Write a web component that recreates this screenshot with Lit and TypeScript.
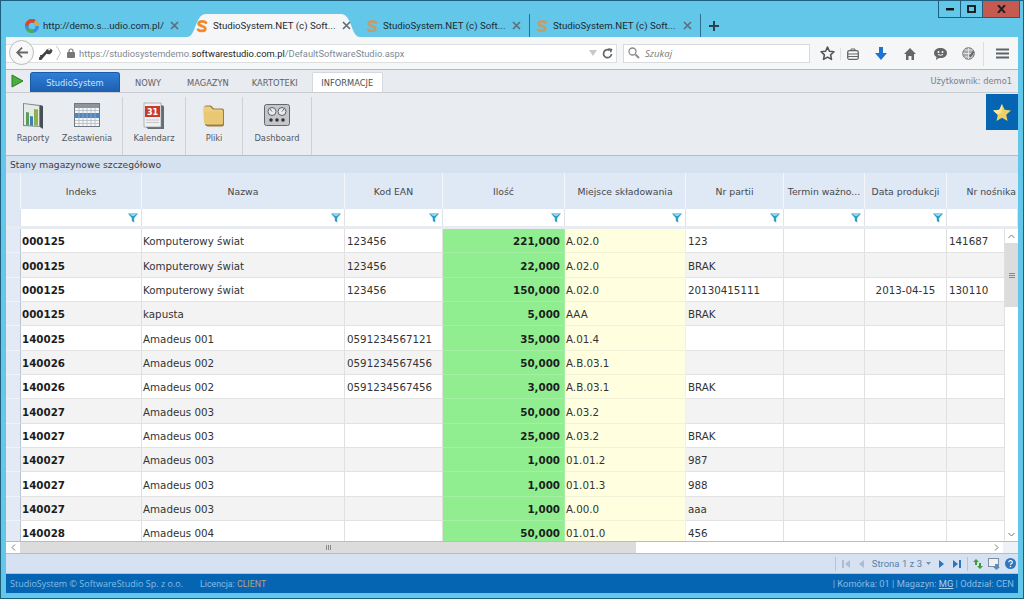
import { LitElement, html, css } from "lit";
import { customElement } from "lit/decorators.js";

const sLogo = (faded: boolean) => html`<svg class="fav ${faded ? "faded" : ""}" viewBox="0 0 16 16"><path d="M12.5 4.2C11 2.4 5 1.8 4.2 5c-.8 3.2 7.8 2.8 7.6 6.2-.2 3-6.4 2.8-8.2 1" fill="none" stroke="#f08a2c" stroke-width="3.2" stroke-linecap="round"/></svg>`;
const ringLogo = html`<svg class="fav" viewBox="0 0 16 16"><circle cx="8" cy="8" r="6" fill="none" stroke="#3c8fd8" stroke-width="4"/><path d="M2 8a6 6 0 0 1 9-5.2" fill="none" stroke="#d8472f" stroke-width="4"/><path d="M3 11.5a6 6 0 0 0 6 2.5" fill="none" stroke="#58a94a" stroke-width="4"/><path d="M11 3a6 6 0 0 1 3 5" fill="none" stroke="#e9a13b" stroke-width="4"/></svg>`;

const TABS = [
  { w: 167, t: "http://demo.s...udio.com.pl/", icon: ringLogo, active: false },
  { w: 173, t: "StudioSystem.NET (c) Soft...", icon: sLogo(false), active: true },
  { w: 170, t: "StudioSystem.NET (c) Soft...", icon: sLogo(true), active: false },
  { w: 171, t: "StudioSystem.NET (c) Soft...", icon: sLogo(true), active: false },
];

const HEAD = ["Indeks", "Nazwa", "Kod EAN", "Ilość", "Miejsce składowania", "Nr partii", "Termin ważno...", "Data produkcji", "Nr nośnika"];

const ROWS: string[][] = [
  ["000125", "Komputerowy świat", "123456", "221,000", "A.02.0", "123", "", "", "141687"],
  ["000125", "Komputerowy świat", "123456", "22,000", "A.02.0", "BRAK", "", "", ""],
  ["000125", "Komputerowy świat", "123456", "150,000", "A.02.0", "20130415111", "", "2013-04-15", "130110"],
  ["000125", "kapusta", "", "5,000", "AAA", "BRAK", "", "", ""],
  ["140025", "Amadeus 001", "0591234567121", "35,000", "A.01.4", "", "", "", ""],
  ["140026", "Amadeus 002", "0591234567456", "50,000", "A.B.03.1", "", "", "", ""],
  ["140026", "Amadeus 002", "0591234567456", "3,000", "A.B.03.1", "BRAK", "", "", ""],
  ["140027", "Amadeus 003", "", "50,000", "A.03.2", "", "", "", ""],
  ["140027", "Amadeus 003", "", "25,000", "A.03.2", "BRAK", "", "", ""],
  ["140027", "Amadeus 003", "", "1,000", "01.01.2", "987", "", "", ""],
  ["140027", "Amadeus 003", "", "1,000", "01.01.3", "988", "", "", ""],
  ["140027", "Amadeus 003", "", "1,000", "A.00.0", "aaa", "", "", ""],
  ["140028", "Amadeus 004", "", "50,000", "01.01.0", "456", "", "", ""],
];

const funnel = html`<svg class="funnel" viewBox="0 0 10 10"><path d="M0 .5h10L6.2 5v4.5L3.8 8V5z" fill="#2b9fc9"/><path d="M1 .5h8L6 3H4z" fill="#8fd6ee"/></svg>`;

const reportIcon = html`<svg class="ricon" viewBox="0 0 24 27"><path d="M2 1l17 2v22L2 24z" fill="#7f8a86"/><path d="M19 3l3 1v23l-3-2z" fill="#4a4f55"/><path d="M3 2l15 2v20L3 23z" fill="#e4ebe8"/><path d="M5 10l3 .4v13L5 23z" fill="#5d9c5a"/><path d="M9 14l3 .4v9.4L9 23.5z" fill="#3f7fb3"/><path d="M13 7l4 .4v16.3L13 23.5z" fill="#8cb24c"/></svg>`;
const tableIcon = html`<svg class="ricon wide" viewBox="0 0 26 24"><rect x=".5" y=".5" width="25" height="23" fill="#f4f6f8" stroke="#6f7780"/><rect x="1" y="1" width="24" height="4" fill="#8c949c"/><rect x="1" y="10" width="24" height="5" fill="#4d86c4"/><path d="M1 7.5h24M1 17.5h24M1 20.5h24M5 5v18M9 5v18M13 5v18M17 5v18M21 5v18" stroke="#a9b1ba" stroke-width=".7" fill="none"/></svg>`;
const calIcon = html`<svg class="ricon" viewBox="0 0 22 27"><path d="M18 3l3 1v23H5l-2-2h15z" fill="#666c73"/><rect x="1" y="1" width="17" height="24" fill="#eef0f2" stroke="#8a8f95" stroke-width=".6"/><rect x="2" y="4" width="15" height="11" fill="#c93a2c"/><text x="9.5" y="13" text-anchor="middle" class="cal31">31</text><path d="M3 18h13M3 20.5h13" stroke="#c4c8cc"/></svg>`;
const folderIcon = html`<svg class="ricon" viewBox="0 0 24 24"><path d="M2 4q0-2 2-2h5l3 3h8q2 0 2 2v14q0 2-2 2H6q-2 0-3-2z" fill="#9a7f3c"/><path d="M1 5q0-2 2-2h5l3 3h8q2 0 2 2v12q0 1-2 1H5q-2 0-3-2z" fill="#eccf84"/><path d="M2 8h19v12H5q-2 0-3-2z" fill="#e8c56d" opacity=".7"/></svg>`;
const dashIcon = html`<svg class="ricon wide" viewBox="0 0 26 22"><rect x=".5" y=".5" width="25" height="21" rx="2" fill="#c4c6c9" stroke="#63676c"/><circle cx="8" cy="7.5" r="4" fill="#e8eaec" stroke="#5e6267"/><circle cx="18" cy="7.5" r="4" fill="#e8eaec" stroke="#5e6267"/><path d="M8 7.5L6 5M18 7.5l2-2.6" stroke="#444" stroke-width=".8"/><circle cx="7" cy="16" r="1.8" fill="#33363a"/><circle cx="13" cy="16" r="1.8" fill="#33363a"/><circle cx="19" cy="16" r="1.8" fill="#33363a"/></svg>`;

@customElement("app-root")
export class AppRoot extends LitElement {
  static styles = css`
    :host { display: block; width: 1024px; height: 599px; overflow: hidden; font-family: "DejaVu Sans", sans-serif; }
    * { box-sizing: border-box; }
    svg { display: block; flex: none; }
    .win { position: relative; width: 1024px; height: 599px; background: #63c7ea; border: 1px solid #1f5f7e; padding: 0 5px 4px; display: flex; flex-direction: column; }
    .winbtns { position: absolute; top: 0; right: 3px; display: flex; height: 17px; border: 1px solid #1f5f7e; border-top: 0; }
    .wb { width: 22px; display: flex; align-items: center; justify-content: center; border-right: 1px solid #1f5f7e; }
    .wb.close { width: 36px; background: #c75a50; border-right: 0; }
    .strip { height: 36px; flex: none; display: flex; align-items: flex-end; padding-left: 14px; font-family: Roboto, sans-serif; font-size: 9.7px; color: #1c2a33; }
    .tab { position: relative; height: 23px; display: flex; align-items: center; gap: 4px; padding: 0 8px 0 5px; border-right: 1px solid #2a6f8e; flex: none; white-space: nowrap; }
    .tab.active { border-right: 0; padding-left: 8px; padding-right: 9px; }
    .tab.first { border-right: 0; }
    .tab .shape { position: absolute; inset: 0; width: 100%; height: 100%; }
    .tab > span, .tab > .fav, .tab > .x { position: relative; }
    .fav { width: 14px; height: 14px; }
    .fav.faded { opacity: .65; }
    .x { margin-left: auto; width: 9px; height: 9px; }
    .plus { width: 26px; height: 23px; display: flex; align-items: center; justify-content: center; }

    .nav { height: 33px; flex: none; background: #f5f6f7; border-bottom: 1px solid #b4b8bc; display: flex; align-items: center; gap: 6px; position: relative; padding-top: 1px; }
    .back { position: absolute; left: 3px; top: 3px; width: 25px; height: 25px; border-radius: 50%; border: 1px solid #b9bcbf; background: #f8f8f8; display: flex; align-items: center; justify-content: center; }
    .urlbar { width: 611px; height: 19px; margin-top: -1px; background: #fff; border: 1px solid #dcdee0; border-left: 0; display: flex; align-items: center; font-family: Roboto, sans-serif; font-size: 9.33px; color: #7e8a93; padding-left: 32px; padding-right: 3px; flex: none; }
    .urlbar b { color: #202428; font-weight: 400; }
    .key { margin-right: 3px; }
    .chev { margin-right: 6px; }
    .lock { margin-right: 4px; }
    .urlend { margin-left: auto; display: flex; align-items: center; gap: 5px; }
    .search { width: 187px; height: 19px; margin-top: -1px; background: #fff; border: 1px solid #d8dadc; display: flex; align-items: center; gap: 5px; padding-left: 4px; font-family: "Open Sans", sans-serif; font-style: italic; font-size: 9.6px; color: #777; flex: none; }
    .tools { flex: 1; display: flex; align-items: center; padding-left: 2px; }
    .tl { width: 18px; height: 18px; display: flex; align-items: center; justify-content: center; }
    .vsep { width: 1px; height: 24px; background: #dcdee0; }
    .vsep.short { height: 12px; margin: 0 3px 0 4px; }
    .gap10 { margin-right: 10px; }
    .gap11 { margin-right: 11px; }
    .gap12 { margin-right: 12px; }
    .gap6 { margin-right: 6px; }
    .gap9 { margin-right: 9px; }

    .menu { height: 23px; flex: none; background: #e8ebef; border-bottom: 1px solid #c8ccd0; display: flex; align-items: flex-end; position: relative; font-size: 8.3px; color: #5d6166; }
    .play { margin: 0 6px 1px 5px; align-self: center; }
    .apps { width: 90px; height: 20px; border-radius: 3px 3px 0 0; background: linear-gradient(#2f7ed6, #1d5fb0); color: #cfe2f7; display: flex; align-items: center; justify-content: center; border: 1px solid #1b5aa8; border-bottom: 0; }
    .mi { height: 19px; display: flex; align-items: center; }
    .mi.nowy { margin-left: 15px; }
    .mi.mag { margin-left: 26px; }
    .mi.kart { margin-left: 23px; }
    .mi.on { height: 20px; width: 71px; background: #fff; border: 1px solid #d5d8dc; border-bottom: 0; border-radius: 2px 2px 0 0; justify-content: center; color: #4a4e53; margin-left: 14px; }
    .user { margin-left: auto; align-self: center; margin-right: 6px; color: #7b8086; }

    .ribbon { height: 63px; flex: none; background: #e9ecf1; border-bottom: 1px solid #b8bcc2; display: flex; position: relative; font-size: 8.3px; color: #55595e; }
    .grp { border-right: 1px solid #ced1d6; display: flex; margin-top: 4px; flex: none; }
    .ri { display: flex; flex-direction: column; align-items: center; flex: 1; padding-top: 5px; }
    .grp.two .ri { flex: 0 0 54px; }
    .ricon { width: 24px; height: 27px; }
    .ricon.wide { width: 26px; height: 24px; margin: 1px 0 2px; }
    .ri span { margin-top: 4px; line-height: 11px; white-space: nowrap; }
    .cal31 { font: bold 8px "DejaVu Sans", sans-serif; fill: #fff; }
    .fav-btn { position: absolute; right: 0; top: 1px; width: 32px; height: 36px; background: #0565b2; display: flex; align-items: center; justify-content: center; }

    .title { height: 17px; flex: none; background: #d6e2f0; font-size: 9.2px; color: #3d4146; display: flex; align-items: center; padding: 0 0 1px 4px; }

    .hdr, .flt, .row { display: grid; }
    .hdr, .flt { grid-template-columns: 15px 121px 203px 98px 122px 121px 98px 81px 82px 71px; }
    .hdr { height: 36px; flex: none; background: #dfe8f5; font-size: 9.3px; color: #45494e; }
    .hdr div { display: flex; align-items: center; justify-content: center; border-right: 1px solid #f2f5fa; white-space: nowrap; overflow: hidden; }
    .hdr div:last-child { border-right: 0; justify-content: flex-end; padding-right: 2px; }
    .flt { height: 17px; flex: none; background: #fff; }
    .flt div { border-right: 1px solid #dfe3e9; display: flex; align-items: center; justify-content: flex-end; padding-right: 3px; }
    .flt div:first-child { background: #dfe8f5; }
    .funnel { width: 10px; height: 10px; }
    .fgap { height: 3px; flex: none; background: #e8ebf0; }

    .body { height: 312px; flex: none; display: flex; overflow: hidden; background: #fff; }
    .rows { width: 999px; flex: none; }
    .row { grid-template-columns: 15px 121px 203px 98px 122px 121px 98px 81px 82px 58px; height: 24.35px; font-size: 10.3px; color: #333; }
    .row div { border-right: 1px solid #e0e0e0; border-bottom: 1px solid #e2e2e2; display: flex; align-items: center; padding: 1px 2px 0; white-space: nowrap; overflow: hidden; background: #fff; }
    .row.alt div { background: #f3f3f3; }
    .row .rh, .row.alt .rh { background: #e3eaf5; border-right: 1px solid #b9c5d4; border-bottom-color: #f0f4fa; }
    .row .idx { font-weight: 700; color: #1c1c1c; padding-left: 1px; }
    .row .nm { padding-left: 1px; }
    .row .qty, .row.alt .qty { background: #90ee90; font-weight: 700; justify-content: flex-end; padding-right: 4px; color: #1c1c1c; border-color: #a5efa5; }
    .row .loc, .row.alt .loc { background: #ffffe0; border-color: #f2f2d8; padding-left: 1px; }
    .row .ctr { justify-content: center; }
    .vbar { width: 13px; flex: none; display: flex; flex-direction: column; background: #fff; }
    .vbtn { height: 14px; flex: none; display: flex; align-items: center; justify-content: center; }
    .vthumb { height: 64px; background: #dcdcdc; display: flex; align-items: center; justify-content: center; }
    .vfill { flex: 1; }
    .grip-v { width: 6px; height: 5px; border-top: 1px solid #888; border-bottom: 1px solid #888; position: relative; }
    .grip-v::after { content: ""; position: absolute; left: 0; right: 0; top: 1px; height: 1px; background: #888; }

    .hbar { height: 13px; flex: none; display: flex; background: #fff; border-top: 1px solid #b9bdc2; border-bottom: 1px solid #b9bdc2; }
    .hbtn { width: 14px; flex: none; display: flex; align-items: center; justify-content: center; background: #fff; }
    .hthumb { width: 616px; flex: none; background: #dcdcdc; display: flex; align-items: center; justify-content: center; }
    .grip-h { width: 5px; height: 5px; border-left: 1px solid #888; border-right: 1px solid #888; position: relative; }
    .grip-h::after { content: ""; position: absolute; top: 0; bottom: 0; left: 1px; width: 1px; background: #888; }
    .htrack { flex: 1; }
    .corner { width: 15px; flex: none; background: #eef2f8; }

    .pager { height: 20px; flex: none; background: #d6e2f1; border-bottom: 1px solid #8fd0ee; display: flex; align-items: center; justify-content: flex-end; font-family: Roboto, sans-serif; font-size: 9.5px; color: #5a7ea8; }
    .pg { width: 16px; height: 16px; display: flex; align-items: center; justify-content: center; }
    .pgsep { width: 1px; height: 14px; background: #b3c4d8; margin: 0 2px; }
    .pgtxt { display: flex; align-items: center; gap: 4px; margin: 0 2px; white-space: nowrap; }
    .foot { height: 19px; flex: none; background: #0565b2; display: flex; align-items: center; justify-content: space-between; font-family: Roboto, sans-serif; font-size: 9.3px; color: #86bce6; padding: 0 4px; }
    .foot .brand { font-family: "Open Sans", sans-serif; font-size: 9px; }
    .foot .left { display: flex; align-items: center; }
    .foot .lic { margin-left: 17px; font-size: 8.8px; }
    .foot .cl { color: #b8a47e; }
    .foot u { color: #a8d2f0; }
  `;

  render() {
    return html`<div class="win">
      <div class="winbtns">
        <div class="wb"><svg width="8" height="3"><rect width="8" height="2.4" fill="#111"/></svg></div>
        <div class="wb"><svg width="9" height="8"><rect x="1" y="1" width="7" height="6" fill="none" stroke="#111" stroke-width="1.8"/></svg></div>
        <div class="wb close"><svg width="9" height="8" viewBox="0 0 9 8"><path d="M1 0l7 8M8 0L1 8" stroke="#222" stroke-width="2"/></svg></div>
      </div>
      ${this.strip()}
      ${this.nav()}
      ${this.menu()}
      ${this.ribbon()}
      <div class="title">Stany magazynowe szczegółowo</div>
      <div class="hdr"><div></div>${HEAD.map((h) => html`<div>${h}</div>`)}</div>
      <div class="flt"><div></div>${HEAD.map((_, i) => html`<div>${i < 8 ? funnel : ""}</div>`)}</div>
      <div class="fgap"></div>
      <div class="body">
        <div class="rows">${ROWS.map((r, i) => html`<div class="row ${i % 2 ? "alt" : ""}">
          <div class="rh"></div>
          <div class="idx">${r[0]}</div><div class="nm">${r[1]}</div><div>${r[2]}</div>
          <div class="qty">${r[3]}</div><div class="loc">${r[4]}</div>
          <div>${r[5]}</div><div>${r[6]}</div><div class="ctr">${r[7]}</div><div>${r[8]}</div>
        </div>`)}</div>
        <div class="vbar">
          <div class="vbtn"><svg width="7" height="5"><path d="M.5 4L3.5 1l3 3" fill="none" stroke="#777"/></svg></div>
          <div class="vthumb"><div class="grip-v"></div></div>
          <div class="vfill"></div>
          <div class="vbtn"><svg width="7" height="5"><path d="M.5 1L3.5 4l3-3" fill="none" stroke="#777"/></svg></div>
        </div>
      </div>
      <div class="hbar">
        <div class="hbtn"><svg width="5" height="7"><path d="M4 .5L1 3.500l3 3" fill="none" stroke="#777"/></svg></div>
        <div class="hthumb"><div class="grip-h"></div></div>
        <div class="htrack"></div>
        <div class="hbtn"><svg width="5" height="7"><path d="M1 .5L4 3.500l-3 3" fill="none" stroke="#777"/></svg></div>
        <div class="corner"></div>
      </div>
      ${this.pager()}
      <div class="foot">
        <div class="left"><span class="brand">StudioSystem © SoftwareStudio Sp. z o.o.</span><span class="lic">Licencja: <span class="cl">CLIENT</span></span></div>
        <div>| Komórka: 01 | Magazyn: <u>MG</u> | Oddział: CEN</div>
      </div>
    </div>`;
  }

  strip() {
    return html`<div class="strip">
      ${TABS.map((t, i) => html`<div class="tab ${t.active ? "active" : ""} ${i === 0 ? "first" : ""}" style="width:${t.w}px">
        ${t.active ? html`<svg class="shape" viewBox="0 0 173 23" preserveAspectRatio="none"><path d="M0 23C9 23 8 0 19 0H154C165 0 164 23 173 23Z" fill="#f5f6f7"/></svg>` : ""}
        ${t.icon}<span>${t.t}</span>
        <svg class="x" viewBox="0 0 9 9"><path d="M1 1l7 7M8 1L1 8" stroke="#5d6f7a" stroke-width="1.7"/></svg>
      </div>`)}
      <div class="plus"><svg width="10" height="10"><path d="M5 0v10M0 5h10" stroke="#29424f" stroke-width="2"/></svg></div>
    </div>`;
  }

  nav() {
    return html`<div class="nav">
      <div class="urlbar">
        <svg class="key" width="15" height="15" viewBox="0 0 14 14"><path d="M13.500 4a3.800 3.800 0 0 1-5.500 3.300L3 13H1v-2.500l1-.5V8.500h1.500L6.800 5.200A3.800 3.800 0 0 1 13.500 4z" fill="#444"/><circle cx="10.500" cy="3.200" r="1" fill="#f5f6f7"/></svg>
        <svg class="chev" width="5" height="16" viewBox="0 0 5 16"><path d="M.5 1L4.500 8 .5 15" fill="none" stroke="#c3c6c9"/></svg>
        <svg class="lock" width="8" height="10" viewBox="0 0 8 10"><rect y="4" width="8" height="6" rx="1" fill="#777"/><path d="M2 4.500V3a2 2 0 0 1 4 0v1.500" fill="none" stroke="#777" stroke-width="1.2"/></svg>
        <span>https://studiosystemdemo.<b>softwarestudio.com.pl</b>/DefaultSoftwareStudio.aspx</span>
        <span class="urlend">
          <svg width="8" height="6"><path d="M0 0h8L4 6z" fill="#c6c8ca"/></svg>
          <svg width="11" height="11" viewBox="0 0 11 11"><path d="M9.500 6A4 4 0 1 1 7.500 2.200" fill="none" stroke="#666" stroke-width="1.700"/><path d="M6 0l4.500 1-1.500 4z" fill="#666"/></svg>
        </span>
      </div>
      <div class="search">
        <svg width="12" height="12" viewBox="0 0 12 12"><circle cx="4.500" cy="4.500" r="3.500" fill="none" stroke="#8a8a8a" stroke-width="1.300"/><path d="M7.500 7.500L11 11" stroke="#8a8a8a" stroke-width="1.800"/></svg>
        <span>Szukaj</span>
      </div>
      <div class="tools">
        <div class="tl"><svg width="15" height="15" viewBox="0 0 14 14"><path d="M7 1l1.800 3.900 4.200.5-3.100 2.900.8 4.200L7 10.400 3.300 12.500l.8-4.200L1 5.400l4.200-.5z" fill="none" stroke="#555" stroke-width="1.500" stroke-linejoin="round"/></svg></div>
        <div class="vsep short"></div>
        <div class="tl gap10"><svg width="12" height="12" viewBox="0 0 12 12"><rect x=".7" y="2.700" width="10.600" height="8.600" rx="1.500" fill="none" stroke="#666" stroke-width="1.300"/><path d="M4 2.700V1h4v1.700M1 6h10M1 8.500h10" stroke="#666" fill="none"/></svg></div>
        <div class="tl gap11"><svg width="12" height="13" viewBox="0 0 12 13"><path d="M4 0h4v6h4l-6 7-6-7h4z" fill="#1e72d2"/></svg></div>
        <div class="tl gap12"><svg width="12" height="12" viewBox="0 0 12 12"><path d="M6 0l6 6h-2v6H7.500V8h-3v4H2V6H0z" fill="#666"/></svg></div>
        <div class="tl gap10"><svg width="13" height="13" viewBox="0 0 13 13"><path d="M6.500 1C10 1 13 3 13 6s-3 5-6 5H5l-3 2 .5-3C1 9 0 8 0 6c0-3 3-5 6.500-5z" fill="#666"/><circle cx="4.500" cy="5" r="1" fill="#fff"/><circle cx="8.500" cy="5" r="1" fill="#fff"/><path d="M4 7.500q2.500 1.500 5 0" stroke="#fff" fill="none"/></svg></div>
        <div class="tl gap6"><svg width="13" height="13" viewBox="0 0 13 13"><circle cx="6.500" cy="6.500" r="5.800" fill="#aaa" stroke="#777"/><path d="M1 6.500h11M6.500 1v11M2.500 3h8M2.500 10h8" stroke="#eee" stroke-width=".8" fill="none"/><path d="M7 9l4-5 1.500 1.200-4 5z" fill="#666"/></svg></div>
        <div class="vsep gap9"></div>
        <div class="tl"><svg width="13" height="11"><path d="M0 1.500h13M0 5.500h13M0 9.500h13" stroke="#5f6468" stroke-width="2"/></svg></div>
      </div>
      <div class="back"><svg width="12" height="11" viewBox="0 0 12 11"><path d="M5.500 0L0 5.500 5.500 11l1.200-1.300L3.500 6.500H12v-2H3.500l3.200-3.200z" fill="#666"/></svg></div>
    </div>`;
  }

  menu() {
    return html`<div class="menu">
      <svg class="play" width="13" height="14" viewBox="0 0 13 14"><path d="M1 1l11 6-11 6z" fill="#4aae3a" stroke="#2d7a25"/></svg>
      <div class="apps">StudioSystem</div>
      <div class="mi nowy">NOWY</div>
      <div class="mi mag">MAGAZYN</div>
      <div class="mi kart">KARTOTEKI</div>
      <div class="mi on">INFORMACJE</div>
      <div class="user">Użytkownik: demo1</div>
    </div>`;
  }

  ribbon() {
    const g = (w: number, items: any[]) => html`<div class="grp ${items.length > 1 ? "two" : ""}" style="width:${w}px">${items.map(
      (it) => html`<div class="ri">${it[0]}<span>${it[1]}</span></div>`)}</div>`;
    return html`<div class="ribbon">
      ${g(117, [[reportIcon, "Raporty"], [tableIcon, "Zestawienia"]])}
      ${g(63, [[calIcon, "Kalendarz"]])}
      ${g(57, [[folderIcon, "Pliki"]])}
      ${g(69, [[dashIcon, "Dashboard"]])}
      <div class="fav-btn"><svg width="18" height="17" viewBox="0 0 20 19"><path d="M10 0l2.900 6.400 7.100.8-5.300 4.700 1.500 7L10 15.300 3.800 18.900l1.500-7L0 7.200l7.100-.8z" fill="#efd066"/><path d="M10 0L7.100 6.400 0 7.200l5.300 4.700L10 9z" fill="#fbe88f"/></svg></div>
    </div>`;
  }

  pager() {
    return html`<div class="pager">
      <div class="pgsep"></div>
      <div class="pg"><svg width="10" height="10"><path d="M1 1h2v8H1zM9 1v8L4 5z" fill="#a9bdd4"/></svg></div>
      <div class="pg"><svg width="7" height="10"><path d="M6 1v8L1 5z" fill="#a9bdd4"/></svg></div>
      <div class="pgtxt">Strona 1 z 3 <svg width="5" height="3"><path d="M0 0h5L2.500 3z" fill="#7a93b0"/></svg></div>
      <div class="pg"><svg width="7" height="10"><path d="M1 1v8l5-4z" fill="#2f74c0"/></svg></div>
      <div class="pg"><svg width="10" height="10"><path d="M1 1v8l5-4zM7 1h2v8H7z" fill="#2f74c0"/></svg></div>
      <div class="pgsep"></div>
      <div class="pg"><svg width="12" height="10" viewBox="0 0 12 10"><path d="M4 0L1 3h2v3h2V3h2zM8 10l3-3H9V4H7v3H5z" fill="#3d9b3d"/></svg></div>
      <div class="pg"><svg width="12" height="12" viewBox="0 0 12 12"><rect x=".5" y=".5" width="10" height="8" fill="#eef2f6" stroke="#7d8ea0"/><path d="M7 6h3v3h2l-3.500 3L5 9h2z" fill="#4f8fd0"/></svg></div>
      <div class="pg"><svg width="11" height="11" viewBox="0 0 11 11"><circle cx="5.500" cy="5.500" r="5.500" fill="#2f74c0"/><path d="M3.800 4.200a1.800 1.600 0 1 1 2.600 1.400c-.6.300-.9.600-.9 1.200" fill="none" stroke="#fff" stroke-width="1.200"/><circle cx="5.500" cy="8.500" r=".8" fill="#fff"/></svg></div>
    </div>`;
  }
}
